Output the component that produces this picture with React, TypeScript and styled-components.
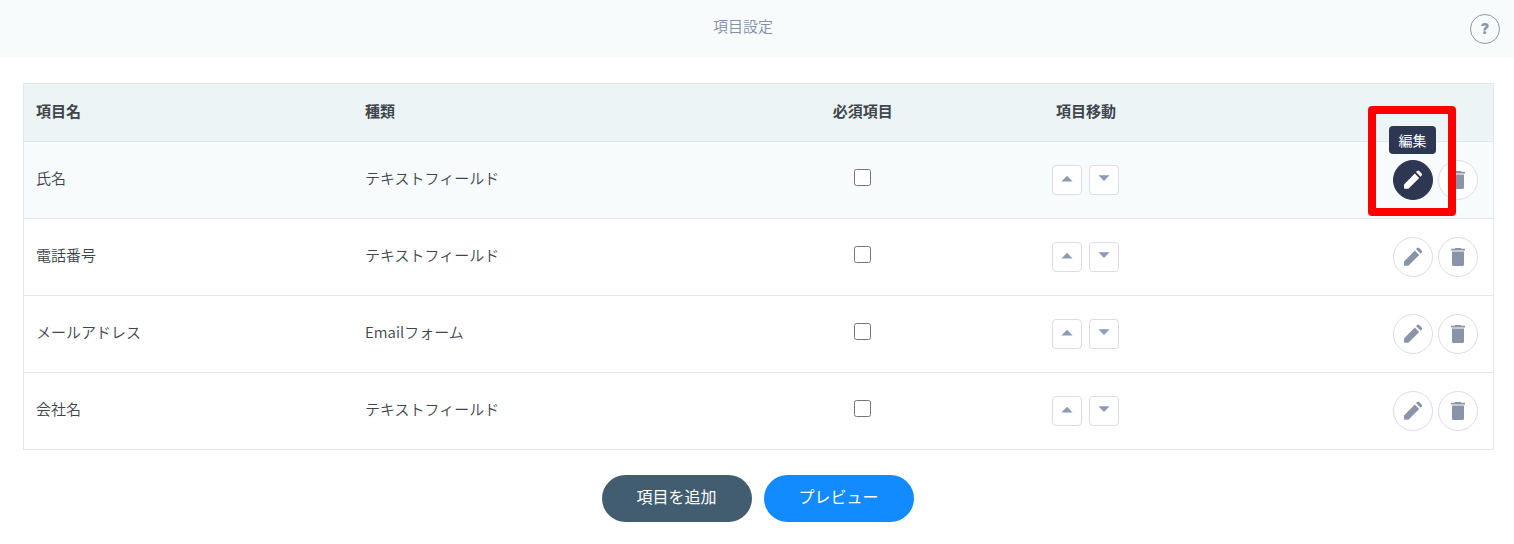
import React from 'react';
import styled, { createGlobalStyle } from 'styled-components';

const GlobalStyle = createGlobalStyle`
  *, *::before, *::after { box-sizing: border-box; }
  body {
    margin: 0;
    background: #ffffff;
    color: #3e454c;
    font-family: "Noto Sans CJK JP", sans-serif;
    font-size: 15px;
    font-weight: 350;
    line-height: 24px;
  }
  button { font: inherit; cursor: pointer; }
`;

const TopBar = styled.header`
  display: flex;
  align-items: center;
  min-height: 57px;
  padding: 0 14px 0 16px;
  background: #f7fbfc;
`;

const Title = styled.h1`
  flex: 1;
  margin: 0;
  padding-bottom: 6px;
  color: #8490a6;
  font-size: 15px;
  font-weight: 350;
  text-align: center;
`;

const HelpButton = styled.button`
  width: 30px;
  height: 30px;
  padding: 0;
  border: 1px solid #8a96b0;
  border-radius: 50%;
  background: transparent;
  color: #8a96ac;
  font-family: Inter, sans-serif;
  font-size: 14px;
  font-weight: 900;
  line-height: 28px;
`;

const Content = styled.main`
  padding: 26px 20px 22px 23px;
`;

const Table = styled.table`
  width: 100%;
  table-layout: fixed;
  border-collapse: separate;
  border-spacing: 0;
  border: 1px solid #e2e7ea;
  border-bottom: 0;
`;

const Column = styled.col<{ $width: string }>`
  width: ${({ $width }) => $width};
`;

type Align = 'left' | 'center' | 'right';

const HeadCell = styled.th<{ $align?: Align }>`
  height: 58px;
  padding: 0 12px 4px;
  border-bottom: 1px solid #e2e7ea;
  background: #ecf4f6;
  font-weight: 700;
  text-align: ${({ $align = 'left' }) => $align};
`;

const Row = styled.tr<{ $active: boolean }>`
  background: ${({ $active }) => ($active ? '#f7fbfc' : '#ffffff')};
`;

const Cell = styled.td`
  height: 77px;
  padding: 0 12px 4px;
  border-bottom: 1px solid #e2e7ea;
`;

const CheckCell = styled(Cell)`
  padding-bottom: 6px;
`;

const MoveCell = styled(Cell)`
  padding: 0 14px 0 12px;
`;

const ActionCell = styled(Cell)`
  padding: 0 15px 0 12px;
`;

const Checkbox = styled.input`
  display: block;
  width: 17px;
  height: 17px;
  margin: 0 auto;
`;

const Controls = styled.div<{ $gap: number; $justify: string }>`
  display: flex;
  align-items: center;
  justify-content: ${({ $justify }) => $justify};
  gap: ${({ $gap }) => $gap}px;
`;

const MoveButton = styled.button`
  display: flex;
  justify-content: center;
  width: 30px;
  height: 30px;
  padding: 9px 0 0;
  border: 1px solid #d9dde7;
  border-radius: 4px;
  background: #ffffff;
  color: #8c9ab5;
`;

const IconButton = styled.button<{ $active?: boolean }>`
  display: flex;
  align-items: center;
  justify-content: center;
  width: 40px;
  height: 40px;
  padding: 0;
  border: 1px solid ${({ $active }) => ($active ? '#2d3752' : '#d9dde7')};
  border-radius: 50%;
  background: ${({ $active }) => ($active ? '#2d3752' : '#ffffff')};
  color: ${({ $active }) => ($active ? '#ffffff' : '#8a94a8')};
`;

const EditSlot = styled.div`
  position: relative;
`;

const Tooltip = styled.span`
  position: absolute;
  bottom: 46px;
  left: -4px;
  width: 47px;
  padding: 3px 0;
  border-radius: 4px;
  background: #2d3752;
  color: #ffffff;
  font-size: 14px;
  font-weight: 400;
  line-height: 22px;
  text-align: center;
  white-space: nowrap;
`;

const Highlight = styled.span`
  position: absolute;
  z-index: 1;
  top: -54px;
  left: -25px;
  width: 88px;
  height: 110px;
  border: 8px solid #ff0000;
  border-radius: 4px;
  pointer-events: none;
`;

const Footer = styled.div`
  display: flex;
  justify-content: center;
  gap: 12px;
  margin-top: 25px;
  padding-right: 2px;
`;

const ActionButton = styled.button<{ $color: string }>`
  width: 150px;
  height: 47px;
  padding: 0 0 6px;
  border: 0;
  border-radius: 24px;
  background: ${({ $color }) => $color};
  color: #ffffff;
  font-size: 16px;
  font-weight: 400;
`;

const PencilIcon = () => (
  <svg width="24" height="24" viewBox="0 0 24 24" fill="currentColor" aria-hidden="true">
    <path d="M15 4.1 16.1 3a1.4 1.4 0 0 1 2 0l2.6 2.6a1.4 1.4 0 0 1 0 2l-1.1 1.1zM3 16.4 13.8 5.6l4.4 4.4L7.4 20.8H3.8a.8.8 0 0 1-.8-.8z" />
  </svg>
);

const TrashIcon = () => (
  <svg width="24" height="24" viewBox="0 0 24 24" fill="currentColor" aria-hidden="true">
    <path d="M19 3.8h-3.5L14.6 3H9.4l-.9.8H5v1.7h14M6 19.4A1.6 1.6 0 0 0 7.6 21h8.8a1.6 1.6 0 0 0 1.6-1.6V6.6H6v12.8z" />
  </svg>
);

const Caret = ({ up = false }: { up?: boolean }) => (
  <svg width="12" height="7" viewBox="0 0 12 7" fill="currentColor" aria-hidden="true">
    <path d={up ? 'M.4 6.6 6 .8l5.6 5.8z' : 'M.4.2h11.2L6 6z'} />
  </svg>
);

const fields = [
  { name: '氏名', type: 'テキストフィールド', active: true },
  { name: '電話番号', type: 'テキストフィールド', active: false },
  { name: 'メールアドレス', type: 'Emailフォーム', active: false },
  { name: '会社名', type: 'テキストフィールド', active: false },
];

export default function App() {
  return (
    <>
      <GlobalStyle />
      <TopBar>
        <Title>項目設定</Title>
        <HelpButton type="button" aria-label="ヘルプ">?</HelpButton>
      </TopBar>
      <Content>
        <Table>
          <colgroup>
            <Column $width="22.4%" />
            <Column $width="27.1%" />
            <Column $width="15.2%" />
            <Column $width="15.2%" />
            <Column $width="20.1%" />
          </colgroup>
          <thead>
            <tr>
              <HeadCell scope="col">項目名</HeadCell>
              <HeadCell scope="col">種類</HeadCell>
              <HeadCell scope="col" $align="center">必須項目</HeadCell>
              <HeadCell scope="col" $align="center">項目移動</HeadCell>
              <HeadCell scope="col" aria-label="操作" />
            </tr>
          </thead>
          <tbody>
            {fields.map(({ name, type, active }) => (
              <Row key={name} $active={active}>
                <Cell>{name}</Cell>
                <Cell>{type}</Cell>
                <CheckCell>
                  <Checkbox type="checkbox" aria-label={`${name} 必須項目`} />
                </CheckCell>
                <MoveCell>
                  <Controls $gap={7} $justify="center">
                    <MoveButton type="button" aria-label={`${name} 上へ`}><Caret up /></MoveButton>
                    <MoveButton type="button" aria-label={`${name} 下へ`}><Caret /></MoveButton>
                  </Controls>
                </MoveCell>
                <ActionCell>
                  <Controls $gap={5} $justify="flex-end">
                    <EditSlot>
                      <IconButton type="button" $active={active} aria-label={`${name} 編集`}>
                        <PencilIcon />
                      </IconButton>
                      {active && <Tooltip role="tooltip">編集</Tooltip>}
                      {active && <Highlight />}
                    </EditSlot>
                    <IconButton type="button" aria-label={`${name} 削除`}><TrashIcon /></IconButton>
                  </Controls>
                </ActionCell>
              </Row>
            ))}
          </tbody>
        </Table>
        <Footer>
          <ActionButton type="button" $color="#435d70">項目を追加</ActionButton>
          <ActionButton type="button" $color="#118bff">プレビュー</ActionButton>
        </Footer>
      </Content>
    </>
  );
}
